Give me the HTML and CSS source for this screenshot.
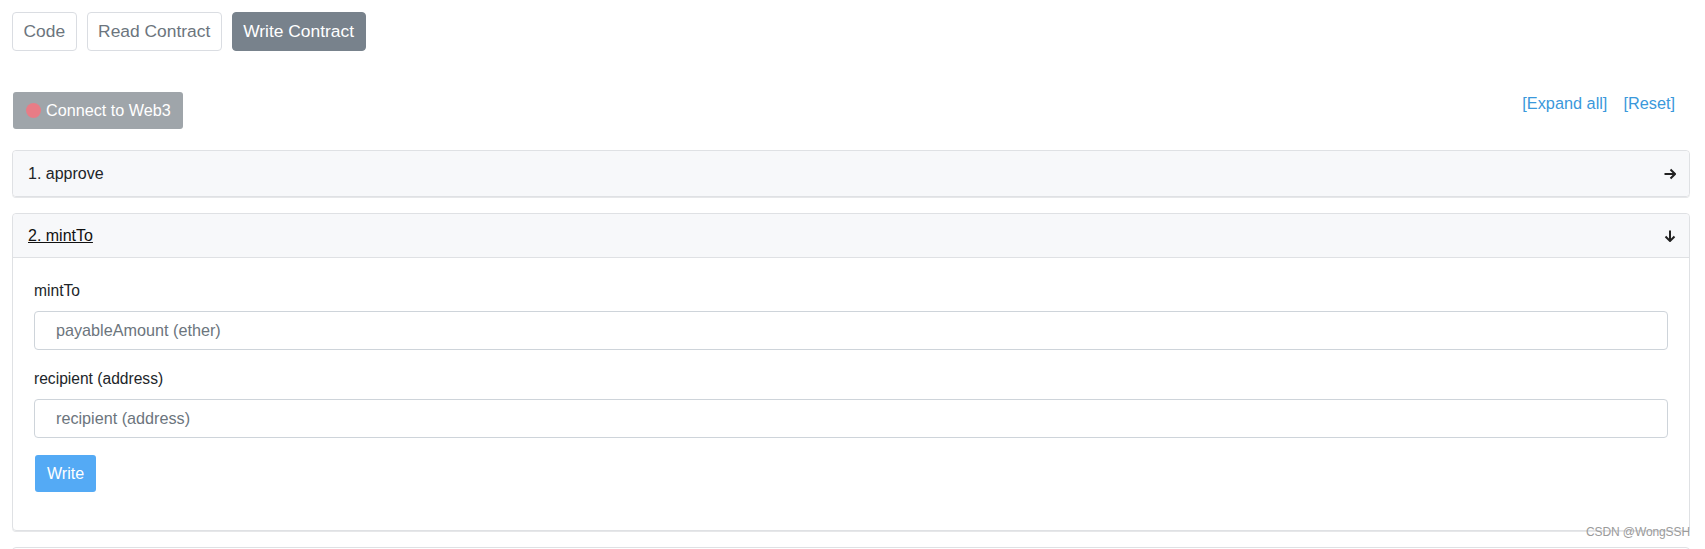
FILE: index.html
```html
<!DOCTYPE html>
<html>
<head>
<meta charset="utf-8">
<link rel="stylesheet" href="styles.css">
</head>
<body>
<div class="page">
  <div class="tabs">
    <span class="tab">Code</span>
    <span class="tab">Read Contract</span>
    <span class="tab active">Write Contract</span>
  </div>

  <div class="toolbar">
    <span class="connect"><span class="dot"></span>Connect to Web3</span>
    <div class="links">
      <a class="link">[Expand all]</a>
      <a class="link">[Reset]</a>
    </div>
  </div>

  <div class="card">
    <div class="card-header">
      <span class="title">1. approve</span>
      <svg class="arrow" width="12" height="12" viewBox="0 0 12 12"><path d="M0.5 6H11M6.5 1.5L11 6L6.5 10.5" fill="none" stroke="#222" stroke-width="2"/></svg>
    </div>
  </div>

  <div class="card">
    <div class="card-header open">
      <span class="title underline">2. mintTo</span>
      <svg class="arrow" width="12" height="12" viewBox="0 0 12 12"><path d="M6 0.5V11M1.5 6.5L6 11L10.5 6.5" fill="none" stroke="#222" stroke-width="2"/></svg>
    </div>
    <div class="card-body">
      <div class="label">mintTo</div>
      <div class="input">payableAmount (ether)</div>
      <div class="label second">recipient (address)</div>
      <div class="input">recipient (address)</div>
      <span class="write">Write</span>
    </div>
  </div>

  <div class="card last"></div>

  <div class="watermark">CSDN @WongSSH</div>
</div>
</body>
</html>
```

FILE: styles.css
```css
html, body {
  margin: 0;
  padding: 0;
  background: #ffffff;
}
body {
  font-family: "Liberation Sans", Arial, sans-serif;
  color: #212529;
  overflow: hidden;
  height: 549px;
}
.page {
  position: relative;
  padding: 12px 15px 0 12px;
  height: 549px;
  box-sizing: border-box;
}
.tabs {
  display: flex;
  gap: 10px;
}
.tab {
  display: inline-flex;
  align-items: center;
  height: 39px;
  box-sizing: border-box;
  padding: 0 10.5px;
  border: 1px solid #dadde2;
  border-radius: 4px;
  font-size: 17.4px;
  color: #6c757d;
}
.tab.active {
  background: #78828c;
  border-color: #78828c;
  color: #ffffff;
}
.toolbar {
  display: flex;
  justify-content: space-between;
  align-items: flex-start;
  margin-top: 41px;
}
.connect {
  display: inline-flex;
  align-items: center;
  height: 37px;
  box-sizing: border-box;
  margin-left: 1px;
  padding: 0 12px 0 13px;
  background: #9fa5aa;
  border-radius: 3px;
  color: #ffffff;
  font-size: 16.2px;
}
.dot {
  width: 15px;
  height: 15px;
  border-radius: 50%;
  background: #e87c86;
  margin-right: 5px;
}
.links {
  display: flex;
  gap: 16px;
  margin-right: 15px;
  line-height: 22px;
}
.link {
  font-size: 16.3px;
  color: #3a98db;
}
.card {
  margin-top: 21px;
  border: 1px solid #dfe1e4;
  border-radius: 4px;
  box-shadow: 0 1px 0 #e6e7e9;
}
.card + .card {
  margin-top: 16px;
}
.card-header {
  display: flex;
  justify-content: space-between;
  align-items: center;
  height: 45px;
  box-sizing: border-box;
  padding: 0 13px 0 15px;
  background: #f7f8fa;
  border-radius: 4px;
  font-size: 16px;
}
.card-header.open {
  height: 44px;
  border-bottom: 1px solid #dfe1e4;
  border-radius: 4px 4px 0 0;
}
.underline {
  text-decoration: underline;
  color: #111;
}
.arrow {
  display: block;
}
.card-body {
  padding: 21px 21px 38px 21px;
}
.label {
  font-size: 15.6px;
  line-height: 24px;
}
.label.second {
  margin-top: 17px;
}
.input {
  margin-top: 8px;
  height: 39px;
  box-sizing: border-box;
  border: 1px solid #ced4da;
  border-radius: 4px;
  display: flex;
  align-items: center;
  padding-left: 21px;
  font-size: 16.2px;
  color: #6c757d;
}
.write {
  display: inline-flex;
  align-items: center;
  margin-top: 17px;
  margin-left: 1px;
  height: 37px;
  box-sizing: border-box;
  padding: 0 12px;
  background: #54aaf5;
  border-radius: 3px;
  color: #ffffff;
  font-size: 16px;
}
.card.last {
  height: 20px;
  box-shadow: none;
}
.watermark {
  position: absolute;
  right: 15px;
  top: 525px;
  font-size: 12px;
  color: #9b9b9b;
  letter-spacing: -0.1px;
}
```
